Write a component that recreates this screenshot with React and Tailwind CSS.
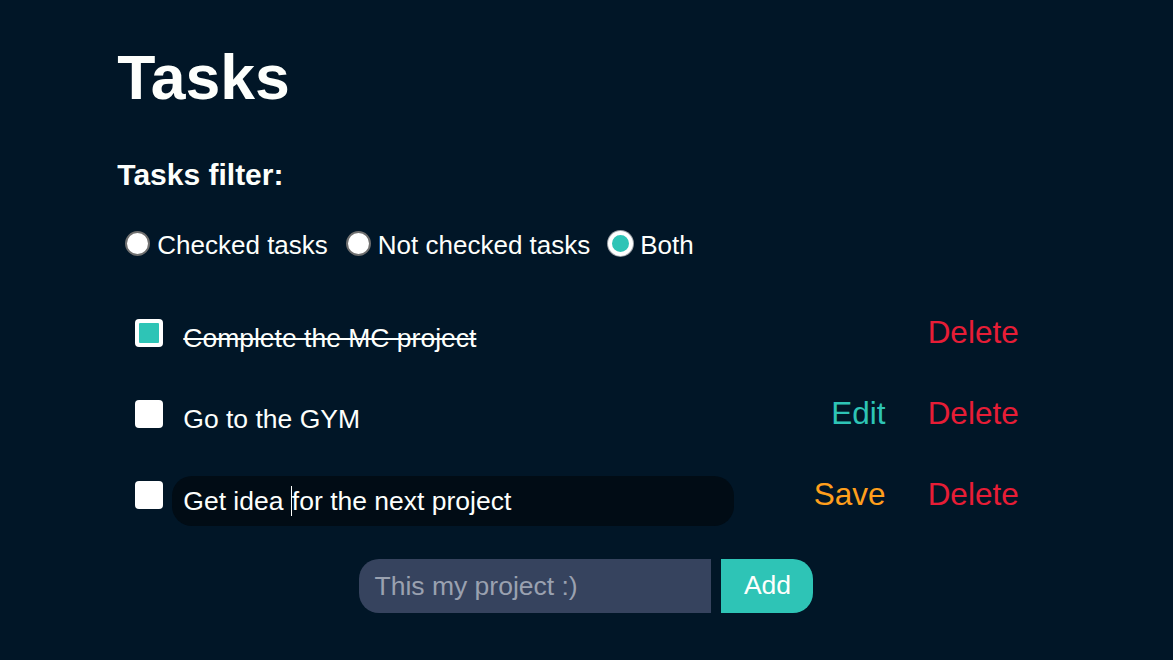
import React from "react";

const font = { fontFamily: '"Liberation Sans", Arial, sans-serif' };

function Radio({ checked, label }) {
  return (
    <label className="flex items-center gap-[7px]">
      {checked ? (
        <span className="w-[25px] h-[25px] rounded-full bg-[#2ec4b6] border-[4px] border-white shadow-[0_0_0_1px_#9aa0a6] box-border" />
      ) : (
        <span className="w-[25px] h-[25px] rounded-full bg-white border-2 border-[#6f6f6f] box-border" />
      )}
      <span className="text-[26px] leading-none text-[#fdfffc] pt-[3px]">{label}</span>
    </label>
  );
}

function Checkbox({ checked }) {
  return checked ? (
    <span className="w-[28px] h-[28px] rounded-[4px] bg-white p-[4px] box-border flex shrink-0">
      <span className="flex-1 rounded-[1px] bg-[#2ec4b6]" />
    </span>
  ) : (
    <span className="w-[28px] h-[28px] rounded-[4px] bg-white shrink-0" />
  );
}

export default function App() {
  return (
    <div className="min-h-[660px] w-full bg-[#011627] text-[#fdfffc]" style={font}>
      <div className="w-[80%] mx-auto pt-[40px]">
        <h1 className="text-[62.5px] font-bold leading-[74px]">Tasks</h1>
        <h2 className="mt-[44px] text-[30px] font-bold leading-[34px]">Tasks filter:</h2>
        <div className="mt-[37px] pl-[8px] flex items-center gap-[18px]">
          <Radio label="Checked tasks" />
          <Radio label="Not checked tasks" />
          <Radio checked label="Both" />
        </div>

        <div className="mt-[34px] pl-[18px] pr-[37px] flex flex-col">
          <div className="h-[81px] flex items-center">
            <Checkbox checked />
            <span className="ml-[20px] text-[26.5px] leading-none pt-[11px] line-through decoration-[2px]">
              Complete the MC project
            </span>
            <div className="ml-auto flex items-center gap-[42px] text-[31.5px] leading-none">
              <button className="text-[#e71d36]">Delete</button>
            </div>
          </div>
          <div className="h-[81px] flex items-center">
            <Checkbox />
            <span className="ml-[20px] text-[26.5px] leading-none pt-[12px]">Go to the GYM</span>
            <div className="ml-auto flex items-center gap-[42px] text-[31.5px] leading-none">
              <button className="text-[#2ec4b6]">Edit</button>
              <button className="text-[#e71d36]">Delete</button>
            </div>
          </div>
          <div className="h-[81px] flex items-center">
            <Checkbox />
            <div className="ml-[9px] mt-[12px] w-[562px] h-[50px] rounded-[20px] bg-[#010c15] flex items-center pl-[11px] pt-[1px] text-[26.5px] leading-none">
              <span className="whitespace-pre">Get idea </span>
              <span className="inline-block w-px h-[30px] bg-[#fdfffc]" />
              <span className="whitespace-pre">for the next project</span>
            </div>
            <div className="ml-auto flex items-center gap-[42px] text-[31.5px] leading-none">
              <button className="text-[#ff9f1c]">Save</button>
              <button className="text-[#e71d36]">Delete</button>
            </div>
          </div>
        </div>

        <form className="mt-[24px] flex justify-center gap-[10px]" onSubmit={(e) => e.preventDefault()}>
          <input
            placeholder="This my project :)"
            className="w-[352px] h-[54px] rounded-l-[20px] bg-[#36435e] pl-[15px] text-[26.5px] text-[#fdfffc] placeholder:text-[#9aa1b0] outline-none"
            style={font}
          />
          <button className="w-[92px] h-[54px] rounded-r-[20px] bg-[#2ec4b6] text-[26.5px] text-[#fdfffc]">
            Add
          </button>
        </form>
      </div>
    </div>
  );
}
